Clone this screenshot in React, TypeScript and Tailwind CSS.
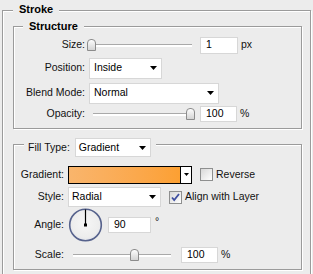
import React from 'react';

const etched = 'border border-[#9b9b9b] shadow-[inset_1px_1px_0_#ffffff,1px_1px_0_#ffffff]';

function Arrow() {
  return (
    <svg width="7" height="4" viewBox="0 0 7 4" className="shrink-0">
      <path d="M0 0h7L3.5 4z" fill="#000" />
    </svg>
  );
}

function Select({ value, width, height, pad }: { value: string; width: string; height: string; pad: string }) {
  return (
    <div className={`flex items-center justify-between bg-white border border-[#d7d7d7] pr-[4px] ${width} ${height} ${pad}`}>
      <span className="text-black">{value}</span>
      <Arrow />
    </div>
  );
}

function NumInput({ value, width, height }: { value: string; width: string; height: string }) {
  return (
    <div className={`flex items-center bg-white border border-[#d7d7d7] pl-[5px] text-black ${width} ${height}`}>
      {value}
    </div>
  );
}

// slider groove with a thumb on top of it
function Slider({ width, thumb }: { width: string; thumb: number }) {
  return (
    <div className={`relative h-[3px] border-t border-[#a9a9a9] bg-white ${width}`}>
      <div
        className="absolute top-[-6px] w-[9px] h-[12px] rounded-t-[4px] border border-[#8c8c8c] bg-gradient-to-b from-[#fdfdfd] to-[#d4d4d4]"
        style={{ left: thumb }}
      />
    </div>
  );
}

function Checkbox({ checked }: { checked?: boolean }) {
  return (
    <div className="w-[13px] h-[13px] border border-[#8e8f8f] bg-gradient-to-br from-[#d8d8d8] to-[#ffffff] flex items-center justify-center">
      {checked && (
        <svg width="9" height="9" viewBox="0 0 9 9">
          <path d="M1 4.5l2.2 2.6L8 1" stroke="#3f4fa0" strokeWidth="1.8" fill="none" />
        </svg>
      )}
    </div>
  );
}

function Dial() {
  return (
    <svg width="35" height="34" viewBox="0 0 35 34" className="shrink-0">
      <defs>
        <radialGradient id="dialFill" cx="50%" cy="45%" r="55%">
          <stop offset="0%" stopColor="#f6f6f6" />
          <stop offset="80%" stopColor="#ededed" />
          <stop offset="100%" stopColor="#dfe2ea" />
        </radialGradient>
      </defs>
      <circle cx="17.5" cy="17" r="15.8" fill="url(#dialFill)" stroke="#56628c" strokeWidth="1.6" />
      <line x1="17.5" y1="17" x2="17.5" y2="1.5" stroke="#000" strokeWidth="1.2" />
      <rect x="16" y="15.5" width="3" height="3" fill="#000" />
    </svg>
  );
}

export default function App() {
  return (
    <div
      className="w-[313px] h-[274px] overflow-hidden bg-[#ececec] pt-[10px] text-[10.5px] text-[#111]"
      style={{ fontFamily: '"Liberation Sans", Arial, sans-serif' }}
    >
      {/* Stroke */}
      <div className={`ml-[2px] w-[309px] h-[272px] flex flex-col ${etched}`}>
        <span className="self-start ml-[10px] px-[6px] -mt-[8px] h-[13px] leading-[13px] bg-[#ececec] font-bold text-[11px] text-black">
          Stroke
        </span>

        {/* Structure */}
        <div className={`mt-[10px] ml-[10px] w-[289px] h-[103px] flex flex-col ${etched}`}>
          <span className="self-start ml-[9px] px-[6px] -mt-[7px] h-[13px] leading-[13px] bg-[#ececec] font-bold text-[11px] text-black">
            Structure
          </span>

          <div className="mt-[1px] h-[22px] flex items-center">
            <span className="w-[71px] text-right">Size:</span>
            <div className="ml-[4px]">
              <Slider width="w-[103px]" thumb={-2} />
            </div>
            <div className="ml-[8px]">
              <NumInput value="1" width="w-[38px]" height="h-[17px]" />
            </div>
            <span className="ml-[3px]">px</span>
          </div>

          <div className="mt-[1px] h-[22px] flex items-center">
            <span className="w-[71px] text-right">Position:</span>
            <div className="ml-[4px]">
              <Select value="Inside" width="w-[73px]" height="h-[21px]" pad="pl-[4px]" />
            </div>
          </div>

          <div className="mt-[3px] h-[22px] flex items-center">
            <span className="w-[71px] text-right">Blend Mode:</span>
            <div className="ml-[4px]">
              <Select value="Normal" width="w-[130px]" height="h-[21px]" pad="pl-[4px]" />
            </div>
          </div>

          <div className="-mt-[1px] h-[22px] flex items-center">
            <span className="w-[71px] text-right">Opacity:</span>
            <div className="ml-[8px]">
              <Slider width="w-[99px]" thumb={93} />
            </div>
            <div className="ml-[8px]">
              <NumInput value="100" width="w-[37px]" height="h-[16px]" />
            </div>
            <span className="ml-[3px]">%</span>
          </div>
        </div>

        {/* Fill */}
        <div className={`mt-[15px] ml-[10px] w-[289px] h-[126px] flex flex-col ${etched}`}>
          <div className="self-start ml-[10px] pl-[4px] pr-[5px] -mt-[8px] h-[21px] flex items-center bg-[#ececec]">
            <span>Fill Type:</span>
            <div className="ml-[5px]">
              <Select value="Gradient" width="w-[76px]" height="h-[19px]" pad="pl-[3px]" />
            </div>
          </div>

          <div className="mt-[5px] h-[23px] flex items-center">
            <span className="w-[50px] text-right">Gradient:</span>
            <div className="ml-[4px] w-[124px] h-[18px] flex border border-black bg-white">
              <div className="flex-1 bg-gradient-to-r from-[#f9b56c] to-[#fca032]" />
              <div className="w-[11px] border-l border-black flex items-center justify-center">
                <svg width="5" height="3" viewBox="0 0 5 3">
                  <path d="M0 0h5L2.5 3z" fill="#000" />
                </svg>
              </div>
            </div>
            <div className="ml-[8px]">
              <Checkbox />
            </div>
            <span className="ml-[3px]">Reverse</span>
          </div>

          <div className="h-[22px] flex items-center">
            <span className="w-[50px] text-right">Style:</span>
            <div className="ml-[4px]">
              <Select value="Radial" width="w-[93px]" height="h-[20px]" pad="pl-[3px]" />
            </div>
            <div className="ml-[8px]">
              <Checkbox checked />
            </div>
            <span className="ml-[3px]">Align with Layer</span>
          </div>

          <div className="h-[34px] flex items-center">
            <span className="w-[50px] text-right">Angle:</span>
            <div className="ml-[4px]">
              <Dial />
            </div>
            <div className="ml-[5px]">
              <NumInput value="90" width="w-[43px]" height="h-[16px]" />
            </div>
            <span className="ml-[4px] self-start mt-[6px]">°</span>
          </div>

          <div className="mt-[2px] h-[22px] flex items-center">
            <span className="w-[50px] text-right">Scale:</span>
            <div className="ml-[9px]">
              <Slider width="w-[98px]" thumb={57} />
            </div>
            <div className="ml-[10px]">
              <NumInput value="100" width="w-[37px]" height="h-[16px]" />
            </div>
            <span className="ml-[3px]">%</span>
          </div>
        </div>
      </div>
    </div>
  );
}
